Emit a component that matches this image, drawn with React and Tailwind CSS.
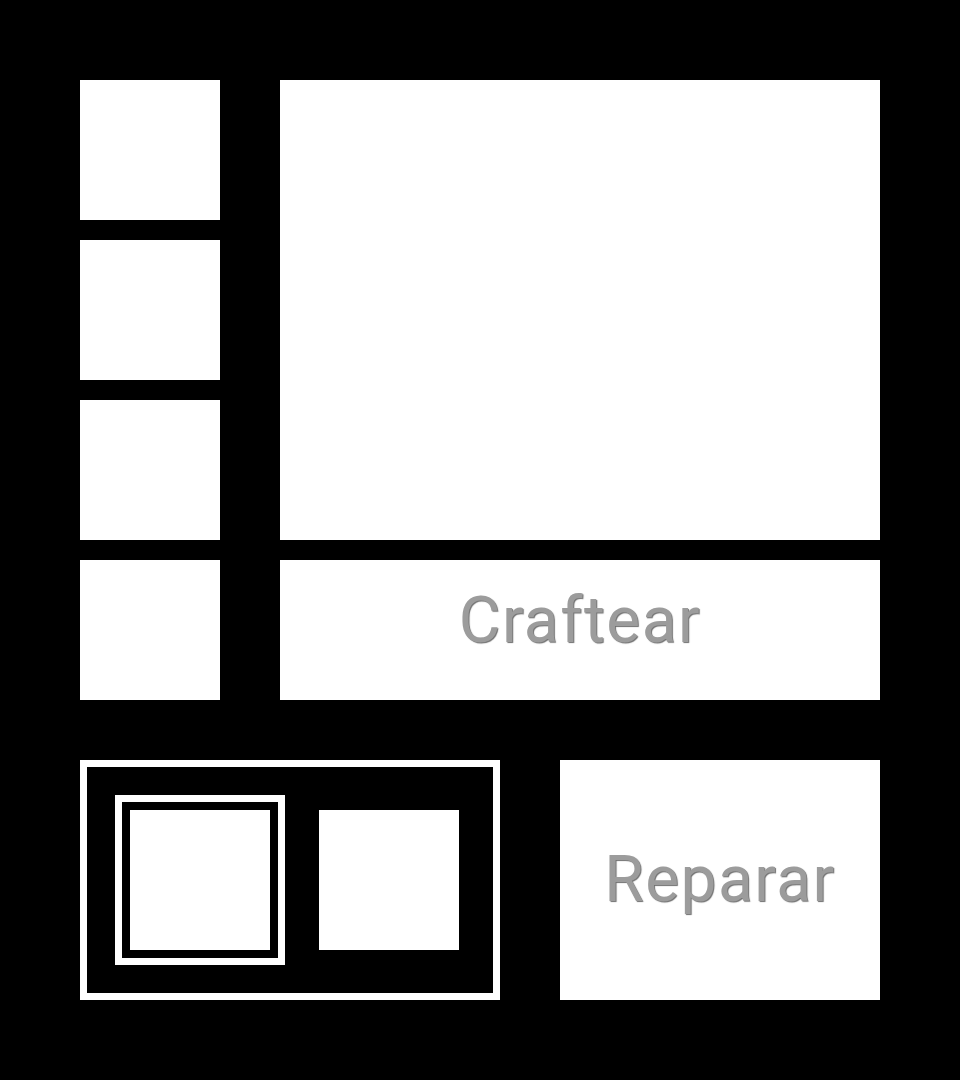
export default function App() {
  const slots = [0, 1, 2, 3];
  const label = "font-['Roboto','Liberation_Sans',sans-serif] font-normal text-[64px] leading-none tracking-[1.5px] text-[#9c9c9c] [text-shadow:1px_1px_1px_#6f6f6f] select-none";

  return (
    <div className="w-[960px] h-[1080px] bg-black p-[80px] flex flex-col gap-[60px]">
      {/* crafting area */}
      <div className="flex gap-[60px]">
        <div className="flex flex-col gap-[20px]">
          {slots.map((s) => (
            <div key={s} className="w-[140px] h-[140px] bg-white" />
          ))}
        </div>
        <div className="flex-1 flex flex-col gap-[20px]">
          <div className="h-[460px] bg-white" />
          <button className="h-[140px] bg-white flex items-center justify-center pb-[18px]">
            <span className={label}>Craftear</span>
          </button>
        </div>
      </div>

      {/* repair area */}
      <div className="flex gap-[60px]">
        <div className="w-[420px] h-[240px] border-[7px] border-white flex items-center pl-[28px]">
          <div className="border-[7px] border-white p-[8px]">
            <div className="w-[140px] h-[140px] bg-white" />
          </div>
          <div className="ml-[34px] w-[140px] h-[140px] bg-white" />
        </div>
        <button className="flex-1 h-[240px] bg-white flex items-center justify-center">
          <span className={label}>Reparar</span>
        </button>
      </div>
    </div>
  );
}
